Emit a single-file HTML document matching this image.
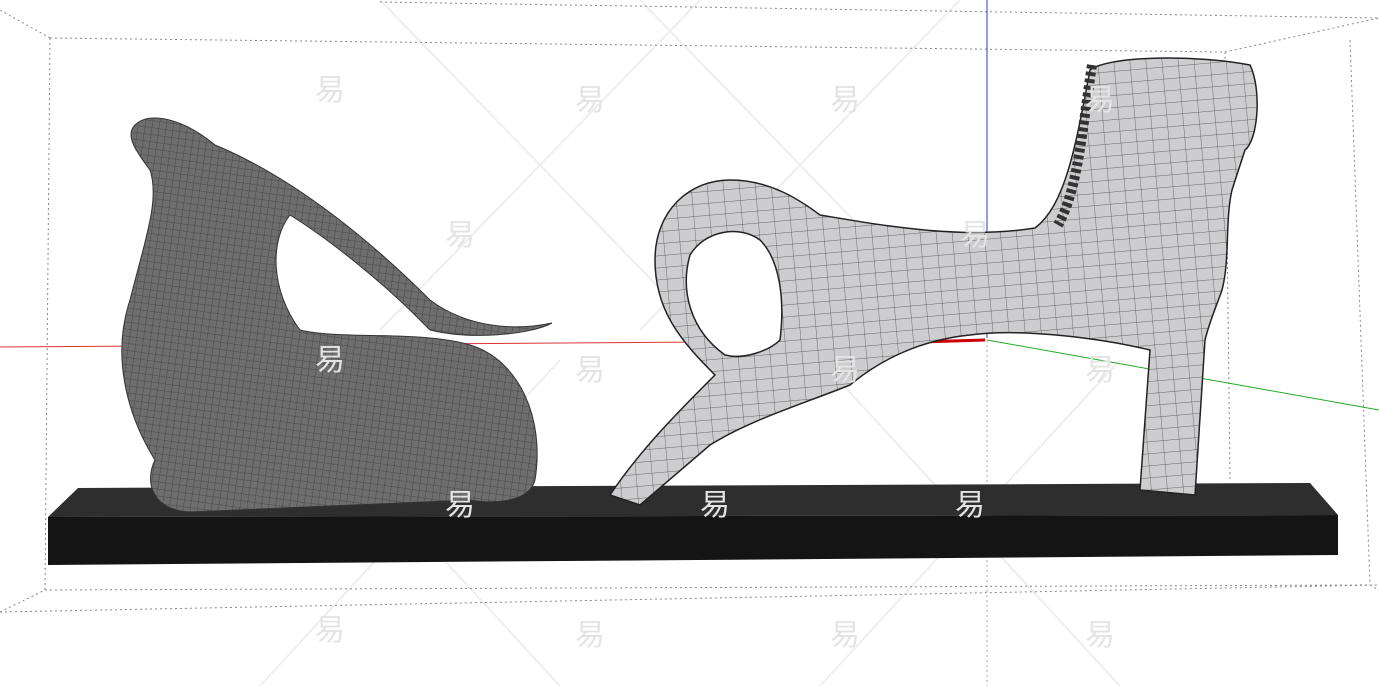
<!DOCTYPE html>
<html><head><meta charset="utf-8"><style>
html,body{margin:0;padding:0;background:#fff;width:1379px;height:686px;overflow:hidden}
svg{display:block}
.wm{font-family:"Liberation Sans","Noto Sans CJK SC",sans-serif;font-size:30px;fill:#e4e4e4}
</style></head><body>
<svg width="1379" height="686" viewBox="0 0 1379 686" xmlns="http://www.w3.org/2000/svg">
<defs>
<pattern id="g1" width="7" height="7" patternUnits="userSpaceOnUse" patternTransform="rotate(8)">
<rect width="7" height="7" fill="#6e6e6e"/><path d="M0 0H7M0 0V7" stroke="#3e3e3e" stroke-width="0.8"/></pattern>
<pattern id="g2" width="16" height="12" patternUnits="userSpaceOnUse" patternTransform="rotate(-5)">
<rect width="16" height="12" fill="#cdcdcf"/><path d="M0 0H16M0 0V12" stroke="#444" stroke-width="0.7"/></pattern>
</defs>
<g stroke="#eee" stroke-width="2" fill="none">
<path d="M380 0L700 330M700 0L380 330M640 0L960 330M960 0L640 330M260 360L560 686M560 360L260 686M820 360L1120 686M1120 360L820 686"/>
</g>
<g stroke="#888" stroke-width="1" stroke-dasharray="2,3" fill="none">
<path d="M50 38L1225 52L1379 18M50 38L0 10M50 38L45 590L0 612M45 590L1370 585L1379 590M1225 52L1230 480M1350 40L1370 585M0 612L1379 585M380 2L1379 18"/>
</g>
<line x1="0" y1="347" x2="985" y2="340" stroke="#d33" stroke-width="1"/>
<line x1="920" y1="342" x2="985" y2="340" stroke="#c00" stroke-width="3"/>
<line x1="987" y1="340" x2="1379" y2="410" stroke="#2a2" stroke-width="1"/>
<line x1="987" y1="0" x2="987" y2="338" stroke="#33c" stroke-width="1"/>
<line x1="987" y1="340" x2="987" y2="686" stroke="#aab" stroke-width="1" stroke-dasharray="2,3"/>
<polygon points="78,488 1310,483 1338,515 48,517" fill="#2e2e2e"/>
<polygon points="48,517 1338,515 1338,555 48,565" fill="#141414"/>
<path d="M135,125 C150,110 185,120 215,145 C300,180 380,250 430,300 C470,330 520,330 552,323 C530,335 470,340 430,330 L420,320 C380,280 330,240 290,215 C270,240 270,290 300,330 C340,340 420,330 470,345 C520,360 545,420 535,480 C530,500 500,505 470,500 L190,512 C150,510 145,480 155,460 C130,420 110,360 130,300 C145,240 160,200 150,170 C135,150 125,135 135,125 Z" fill="url(#g1)" stroke="#333" stroke-width="1"/>
<path d="M610,495 C640,450 680,410 715,375 C680,340 655,310 655,260 C655,210 690,180 730,180 C770,180 800,200 820,215 C880,225 960,240 1035,228 C1065,205 1075,150 1090,70 C1110,55 1200,55 1250,65 C1262,90 1258,140 1245,150 L1232,190 C1225,220 1230,260 1222,290 C1215,310 1210,320 1205,340 L1195,495 L1140,490 L1150,350 C1100,338 1020,328 970,335 C920,340 880,360 850,385 C800,405 750,420 710,445 L640,505 Z" fill="url(#g2)" stroke="#222" stroke-width="1.5"/>
<path d="M725,355 C690,330 680,290 690,255 C705,230 740,225 760,240 C780,260 785,300 780,340 C770,350 745,360 725,355 Z" fill="#fff" stroke="#222" stroke-width="1.5"/>
<path d="M1092,65 C1082,130 1078,190 1058,225" stroke="#333" stroke-width="10" fill="none" stroke-dasharray="4,3"/>
<g class="wm">
<text x="315" y="100">易</text><text x="575" y="110">易</text><text x="830" y="110">易</text><text x="1085" y="110">易</text>
<text x="445" y="245">易</text><text x="960" y="245">易</text>
<text x="315" y="370">易</text><text x="575" y="380">易</text><text x="830" y="380">易</text><text x="1085" y="380">易</text>
<text x="445" y="515">易</text><text x="700" y="515">易</text><text x="955" y="515">易</text>
<text x="315" y="640">易</text><text x="575" y="645">易</text><text x="830" y="645">易</text><text x="1085" y="645">易</text>
</g>
</svg>
</body></html>
